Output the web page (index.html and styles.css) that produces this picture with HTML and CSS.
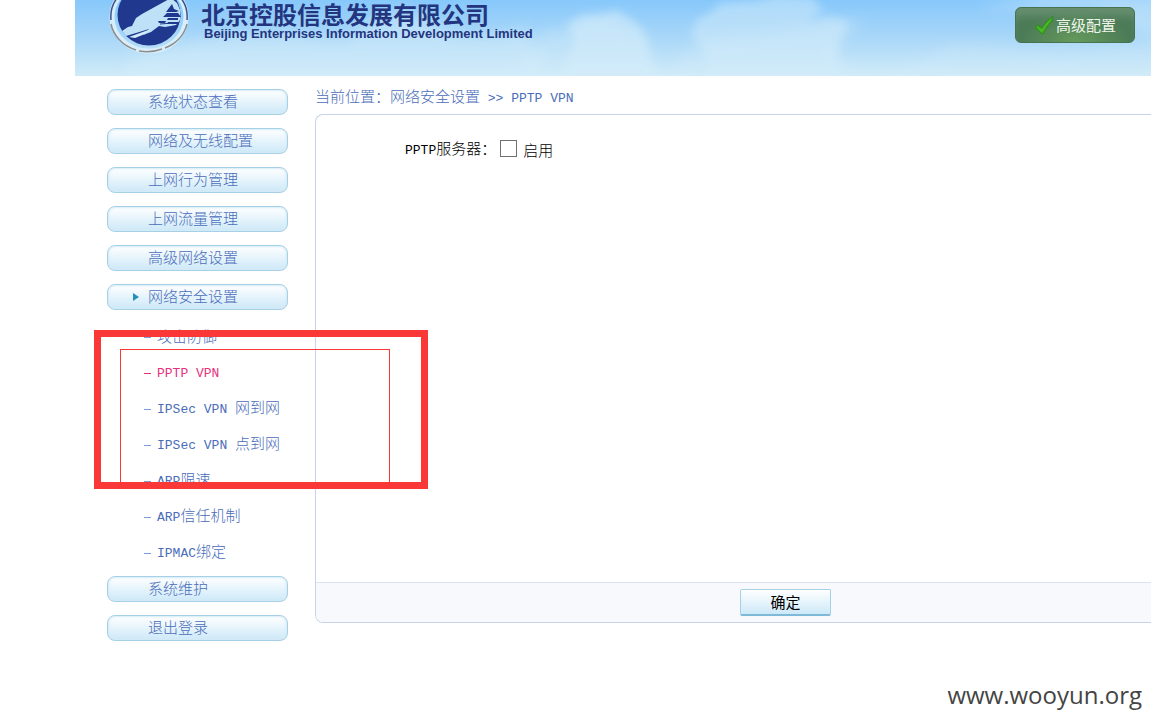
FILE: index.html
```
<!DOCTYPE html>
<html lang="zh-CN">
<head>
    <meta charset="UTF-8">
    <meta name="viewport" content="width=device-width, initial-scale=1.0">
    <title>PPTP VPN</title>
    <link rel="stylesheet" href="styles.css">
</head>
<body>
    <header class="header">
        <svg class="clouds" viewBox="0 0 1076 76" preserveAspectRatio="xMinYMin slice" aria-hidden="true">
            <defs>
                <filter id="soft" x="-20%" y="-40%" width="140%" height="180%"><feGaussianBlur stdDeviation="7" /></filter>
                <filter id="edge" x="-20%" y="-40%" width="140%" height="180%"><feGaussianBlur stdDeviation="4" /></filter>
            </defs>
            <g fill="#d3ecfa">
                <path filter="url(#soft)" opacity=".5" d="M50 62Q150 22 270 42Q300 14 325 12Q355 14 375 34Q430 42 450 26L480 90H50Z" />
                <path filter="url(#soft)" opacity=".4" d="M430 90L460 42Q470 26 490 30L525 14L570 40L590 90Z" />
                <path filter="url(#edge)" opacity=".6" d="M480 90L500 42L492 24L508 15L526 16L540 10L552 16L566 27L574 42L572 56L590 90Z" />
                <path filter="url(#edge)" opacity=".5" d="M616 35L622 20L636 12L646 3L680 1L700-4L736-3L748 10L732 22L756 16L774 22L764 42L760 90H640L628 48Z" />
                <path filter="url(#soft)" opacity=".35" d="M575 90L625 40L700 32L790 18L760 50L800 90Z" />
                <path filter="url(#soft)" opacity=".5" d="M900 8L980-6H1090V40L1050 28L1020 10Z" />
                <path filter="url(#soft)" opacity=".3" d="M780 90L880 44L990 52L1090 40V90Z" />
            </g>
        </svg>
        <div class="header-bar">
            <div class="brand">
                <svg class="brand-logo" width="80" height="54" viewBox="0 0 80 54" aria-hidden="true">
                    <ellipse cx="40" cy="17" rx="37" ry="34" fill="none" stroke="#d8eefb" stroke-width="5" />
                    <path d="M2 20A38 34 0 0 1 14-8M78 20A38 34 0 0 0 66-8" fill="none" stroke="#3f5288" stroke-width="1.5" />
                    <path d="M2 24A38 34 0 0 0 27 50M30 51A38 34 0 0 0 53 49M56 48A38 34 0 0 0 78 24" fill="none" stroke="#8d8f8c" stroke-width="1.5" />
                    <ellipse cx="40" cy="15" rx="31.500" ry="30.500" fill="#20398f" />
                    <path d="M13 31L19 27L23 26L27 18L33 14L62-2L68 3L71 10L71 20L67 25L56 27L50 26L42 32L34 35L40 29L27 33L17 36Z" fill="#bfe1f7" />
                    <path d="M20 37L42 29L36 34L26 38Z" fill="#d4ecfa" />
                    <path d="M63 4L65 9L70 11L67 12H57L60 8ZM58 13H69L72 17H54ZM59 18H69V20H58ZM49 21H57L56 23H50ZM59 22H69V24H58Z" fill="#20398f" />
                    <path d="M51 24L64 23" fill="none" stroke="#20398f" stroke-width="1" />
                </svg>
                <div class="brand-text">
                    <div class="brand-name">北京控股信息发展有限公司</div>
                    <div class="brand-name-en">Beijing Enterprises Information Development Limited</div>
                </div>
            </div>
            <button class="advanced-button" type="button">
                <svg width="20" height="20" viewBox="0 0 20 20" aria-hidden="true">
                    <path d="M1 12L4 10L8 13Q12 6 19 1L18 6Q13 11 9 19H8Z" fill="#3cab1f" stroke="#2f8a20" stroke-width="1" />
                    <path d="M3 12L8 15Q12 8 17 4L16 6Q12 10 8 17Z" fill="#52c02a" />
                </svg>
                <span>高级配置</span>
            </button>
        </div>
    </header>

    <div class="page">
        <nav class="sidebar">
            <a class="menu-item" href="#">系统状态查看</a>
            <a class="menu-item" href="#">网络及无线配置</a>
            <a class="menu-item" href="#">上网行为管理</a>
            <a class="menu-item" href="#">上网流量管理</a>
            <a class="menu-item" href="#">高级网络设置</a>
            <a class="menu-item open" href="#">网络安全设置</a>
            <ul class="submenu">
                <li><a href="#">攻击防御</a></li>
                <li><a class="active" href="#"><span class="latin">PPTP VPN</span></a></li>
                <li><a href="#"><span class="latin">IPSec VPN </span>网到网</a></li>
                <li><a href="#"><span class="latin">IPSec VPN </span>点到网</a></li>
                <li><a href="#"><span class="latin">ARP</span>限速</a></li>
                <li><a href="#"><span class="latin">ARP</span>信任机制</a></li>
                <li><a href="#"><span class="latin">IPMAC</span>绑定</a></li>
            </ul>
            <a class="menu-item" href="#">系统维护</a>
            <a class="menu-item" href="#">退出登录</a>
            <div class="mark-outer"></div>
            <div class="mark-inner"></div>
        </nav>

        <main class="content">
            <div class="location">当前位置：网络安全设置<span class="latin"> &gt;&gt; PPTP VPN</span></div>
            <form class="panel">
                <div class="panel-body">
                    <span><span class="latin">PPTP</span>服务器：</span>
                    <input class="enable-box" type="checkbox" id="pptp">
                    <label for="pptp">启用</label>
                </div>
                <div class="panel-footer">
                    <button class="submit-button" type="button">确定</button>
                </div>
            </form>
        </main>
    </div>

    <footer class="site">www.wooyun.org</footer>
</body>
</html>
```
FILE: styles.css
```
body {
    margin: 0;
    font-family: "Liberation Sans", "Noto Sans CJK SC", sans-serif;
    font-size: 15px;
    font-weight: 300;
    line-height: 20px;
    color: #000;
    background-color: #fff;
}

a {
    color: #4a6dba;
    text-decoration: none;
}

.latin {
    font-family: "Liberation Mono", monospace;
    font-size: 13px;
    white-space: pre;
}

/* header */
.header {
    display: grid;
    height: 76px;
    margin-left: 75px;
    overflow: hidden;
    background: linear-gradient(#87c8fb, #a9d7f8 50%, #d0ebf8);
}

.clouds {
    grid-area: 1 / 1;
    width: 100%;
    height: 76px;
}

.header-bar {
    grid-area: 1 / 1;
    display: flex;
    justify-content: space-between;
    align-items: flex-start;
    padding: 0 16px 0 34px;
    z-index: 1;
}

.brand {
    display: flex;
    gap: 12px;
}

.brand-text {
    font-weight: bold;
    color: #24357f;
    white-space: nowrap;
}

.brand-name {
    padding: 2px 0 1px;
    font-family: "Noto Sans CJK SC", sans-serif;
    font-size: 24px;
    line-height: 24px;
}

.brand-name-en {
    padding-left: 3px;
    font-size: 13px;
    line-height: 13px;
}

.advanced-button {
    display: flex;
    align-items: center;
    gap: 2px;
    width: 120px;
    height: 36px;
    margin-top: 7px;
    padding: 0 18px;
    border: 1px solid #47734f;
    border-radius: 6px;
    background: radial-gradient(ellipse at 50% 100%, #659a5b, #4c7b57 65%);
    box-shadow: inset 0 12px 8px -4px rgba(255, 255, 255, 0.15);
    font: 15px/20px "Noto Sans CJK SC", sans-serif;
    color: #eef5ec;
    white-space: nowrap;
    cursor: pointer;
}

.advanced-button svg {
    flex: none;
}

/* layout */
.page {
    display: flex;
    align-items: flex-start;
    gap: 27px;
    padding: 13px 0 0 107px;
}

.sidebar {
    position: relative;
    display: flex;
    flex-direction: column;
    gap: 13px;
    flex: none;
    width: 181px;
}

.menu-item {
    box-sizing: border-box;
    height: 26px;
    padding-left: 40px;
    border: 1px solid #a5d0e6;
    border-radius: 8px;
    background: linear-gradient(#fff, #e8f5fc 45%, #cde8f8);
    box-shadow: inset 0 0 2px 1px #d5ebf6;
    line-height: 24px;
}

.open::before {
    content: "";
    float: left;
    margin: 8px 0 0 -15px;
    border: 4px solid transparent;
    border-left: 6px solid #248fbd;
    border-right: 0;
}

.submenu {
    margin: -4px 0 -8px;
    padding: 0 0 0 37px;
    list-style: none;
    white-space: nowrap;
}

.submenu li {
    display: flex;
    align-items: center;
    gap: 6px;
    height: 36px;
}

.submenu li::before {
    content: "";
    width: 7px;
    height: 1px;
    background-color: #7d9dd8;
}

.submenu .active {
    color: #e8307c;
}

.submenu li:has(.active)::before {
    background-color: #e8307c;
}

/* red frames over the VPN entries */
.mark-outer,
.mark-inner {
    position: absolute;
    box-sizing: border-box;
    pointer-events: none;
}

.mark-outer {
    top: 241px;
    left: -13px;
    width: 334px;
    height: 159px;
    border: 7px solid #fb3838;
}

.mark-inner {
    top: 260px;
    left: 13px;
    width: 270px;
    height: 134px;
    border: 1px solid #fb3838;
}

/* content */
.content {
    flex: 1;
    min-width: 0;
}

.location {
    height: 25px;
    line-height: 16px;
    color: #4a6dba;
}

.panel {
    border: 1px solid #c8d3ea;
    border-right: 0;
    border-radius: 8px 0 0 8px;
    overflow: hidden;
}

.panel-body {
    display: flex;
    align-items: flex-start;
    min-height: 443px;
    padding: 24px 0 0 89px;
}

.enable-box {
    appearance: none;
    width: 17px;
    height: 17px;
    margin: 1px 6px 0 4px;
    border: 1px solid #707070;
    background-color: #fff;
}

.enable-box:checked {
    background-color: #5f80c4;
}

.panel-body label {
    padding-top: 2px;
}

.panel-footer {
    display: flex;
    justify-content: center;
    padding: 6px 0 6px 104px;
    border-top: 1px solid #dbe2f0;
    background-color: #f7f9fd;
}

.submit-button {
    width: 91px;
    height: 27px;
    padding: 0;
    border: 1px solid #a5d0e6;
    border-bottom: 2px solid #7fb9d8;
    border-radius: 2px;
    background: linear-gradient(#fff, #e8f5fc 45%, #cde8f8);
    font: 15px/24px "Noto Sans CJK SC", sans-serif;
    color: #000;
    cursor: pointer;
}

.site {
    padding: 38px 9px 0 0;
    font-family: "Open Sans", sans-serif;
    font-size: 24px;
    font-weight: 400;
    line-height: 32px;
    text-align: right;
    color: #444;
}
```
